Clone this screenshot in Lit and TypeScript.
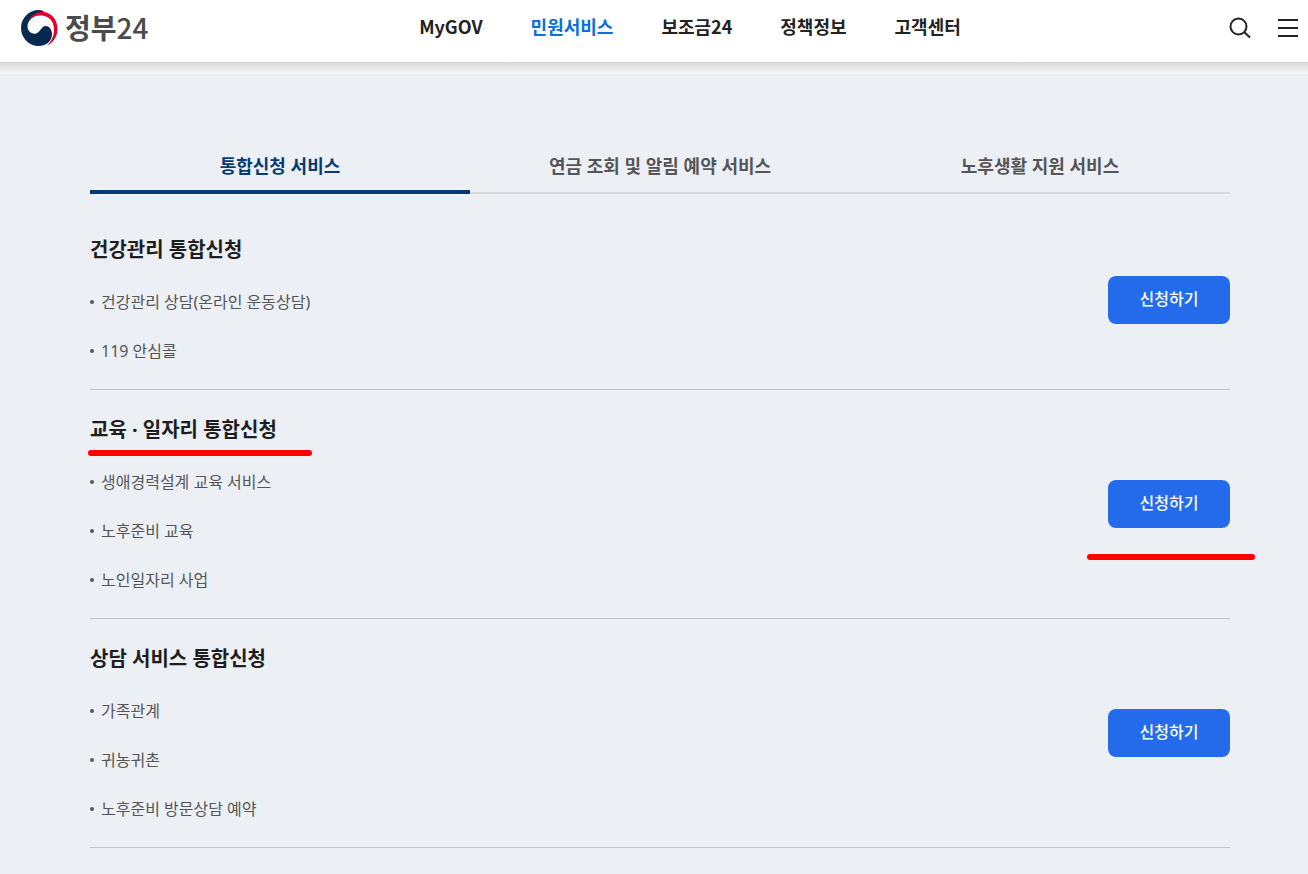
import { LitElement, html, css, nothing } from "lit";
import { customElement, state } from "lit/decorators.js";
import { classMap } from "lit/directives/class-map.js";

interface Section {
  title: string;
  items: string[];
  marked?: boolean;
}

const NAV = ["MyGOV", "민원서비스", "보조금24", "정책정보", "고객센터"];
const TABS = ["통합신청 서비스", "연금 조회 및 알림 예약 서비스", "노후생활 지원 서비스"];
const SECTIONS: Section[] = [
  { title: "건강관리 통합신청", items: ["건강관리 상담(온라인 운동상담)", "119 안심콜"] },
  {
    title: "교육 · 일자리 통합신청",
    items: ["생애경력설계 교육 서비스", "노후준비 교육", "노인일자리 사업"],
    marked: true,
  },
  { title: "상담 서비스 통합신청", items: ["가족관계", "귀농귀촌", "노후준비 방문상담 예약"] },
];

@customElement("gov-header")
class GovHeader extends LitElement {
  static styles = css`
    :host {
      display: block;
      font-family: "Noto Sans CJK KR", sans-serif;
    }
    .bar {
      display: grid;
      grid-template-columns: 1fr auto 1fr;
      align-items: center;
      height: 56px;
      padding: 0 10px 6px 20px;
      background: #fff;
      color: #222;
    }
    .shade {
      height: 12px;
      background: linear-gradient(#d6d6d6, #f9f9f9);
    }
    .logo {
      display: flex;
      align-items: center;
      gap: 7px;
      color: #4a4b4d;
      font-size: 28px;
      line-height: 38px;
      font-weight: 700;
      text-decoration: none;
    }
    .name {
      padding-bottom: 2px;
    }
    .digits {
      font-weight: 500;
    }
    .nav {
      display: flex;
      gap: 48px;
      padding: 0 0 4px 62px;
    }
    .link {
      color: #222;
      font-size: 18px;
      line-height: 26px;
      font-weight: 700;
      text-decoration: none;
      white-space: nowrap;
    }
    .link.current {
      color: #0b6fdc;
    }
    .tools {
      display: flex;
      justify-content: flex-end;
      gap: 26px;
    }
    .tool {
      display: flex;
      padding: 0;
      border: 0;
      background: none;
      color: #222;
      cursor: pointer;
    }
  `;

  render() {
    return html`
      <header>
        <div class="bar">
          <a class="logo" href="#">
            <svg width="38" height="38" viewBox="0 0 38 38" aria-hidden="true">
              <path
                fill="#06294f"
                d="M19 1C9 1 1 9 1 19s8 18 17.500 18C25.500 37 32 33 32 25C32 20.500 29 17 25.500 17C21.500 17 20.500 23 16 24.500C11.500 25.500 7.500 22 7.500 17.500C7.500 11 14 6 22 5C24 4.700 25 4.700 26 5C24.500 2.500 22 1 19 1Z"
              />
              <path
                fill="#e4002b"
                d="M10 8.500C13.500 4.500 18.500 2.500 23.500 3C31.500 3.800 37.500 11 37.500 19.500C37.500 27.500 33.500 33.500 26.500 37C31.500 32.500 34 27 34 20.500C34 12.500 29.500 7.300 22 6.500C17.500 6 13 7 10 9.500Z"
              />
            </svg>
            <span class="name">정부<span class="digits">24</span></span>
          </a>
          <nav class="nav">
            ${NAV.map(
              (n, i) => html`<a class=${classMap({ link: true, current: i === 1 })} href="#">${n}</a>`
            )}
          </nav>
          <div class="tools">
            <button class="tool" aria-label="검색">
              <svg width="24" height="24" viewBox="0 0 24 24" fill="none" stroke="currentColor" stroke-width="2">
                <circle cx="10.500" cy="10.500" r="8" />
                <path d="M16 16L22 21.500" />
              </svg>
            </button>
            <button class="tool" aria-label="전체 메뉴">
              <svg width="20" height="24" viewBox="0 0 20 24" fill="none" stroke="currentColor" stroke-width="2">
                <path d="M0 4H20M0 12H20M0 20H20" />
              </svg>
            </button>
          </div>
        </div>
        <div class="shade"></div>
      </header>
    `;
  }
}

@customElement("app-root")
class AppRoot extends LitElement {
  @state() private active = 0;

  static styles = css`
    :host {
      display: block;
      min-height: 100vh;
      background: #ecf0f5;
      font-family: "Noto Sans", "Noto Sans CJK KR", sans-serif;
      color: #1e1e1e;
    }
    .main {
      padding: 66px 78px 26px 90px;
    }
    .tabs {
      display: grid;
      grid-template-columns: repeat(3, 1fr);
      box-shadow: inset 0 -2px #d6d8da;
    }
    .tab {
      padding: 11px 0 9px;
      border: 0;
      border-bottom: 4px solid transparent;
      background: none;
      color: #555;
      font-family: inherit;
      font-size: 18px;
      line-height: 30px;
      font-weight: 700;
      cursor: pointer;
    }
    .tab.active {
      border-bottom-color: #063a74;
      color: #063a74;
    }
    .panel {
      padding-top: 16px;
    }
    .section {
      display: flex;
      align-items: center;
      justify-content: space-between;
      border-bottom: 1px solid #c2c4c8;
    }
    .body {
      padding: 25px 0 26px;
    }
    .title {
      position: relative;
      margin: 0 0 25px;
      font-size: 20px;
      line-height: 30px;
      font-weight: 700;
    }
    .list {
      display: grid;
      gap: 25px;
      margin: 0;
      padding: 0;
      list-style: none;
    }
    .item {
      display: flex;
      align-items: center;
      gap: 7px;
      color: #555;
      font-size: 16px;
      line-height: 24px;
    }
    .item::before {
      content: "";
      width: 4px;
      height: 4px;
      border-radius: 50%;
      background: #555;
    }
    .action {
      position: relative;
    }
    .apply {
      display: block;
      width: 122px;
      height: 48px;
      padding: 0 0 2px;
      border: 0;
      border-radius: 8px;
      background: #246beb;
      color: #fff;
      font-family: inherit;
      font-size: 16px;
      line-height: 24px;
      font-weight: 500;
      cursor: pointer;
    }
    .mark {
      position: absolute;
      height: 6px;
      border-radius: 3px;
      background: #f00;
    }
    .mark-title {
      top: 35px;
      left: -2px;
      width: 224px;
    }
    .mark-action {
      top: 74px;
      left: -21px;
      width: 168px;
    }
  `;

  render() {
    return html`
      <gov-header></gov-header>
      <main class="main">
        <div class="tabs" role="tablist">
          ${TABS.map(
            (t, i) => html`<button
              role="tab"
              aria-selected=${i === this.active}
              class=${classMap({ tab: true, active: i === this.active })}
              @click=${() => (this.active = i)}
            >${t}</button>`
          )}
        </div>
        <div class="panel" role="tabpanel">
          ${SECTIONS.map(
            (s) => html`<section class="section">
              <div class="body">
                <h2 class="title">
                  ${s.title}${s.marked ? html`<span class="mark mark-title"></span>` : nothing}
                </h2>
                <ul class="list">
                  ${s.items.map((x) => html`<li class="item">${x}</li>`)}
                </ul>
              </div>
              <div class="action">
                <button class="apply">신청하기</button>
                ${s.marked ? html`<span class="mark mark-action"></span>` : nothing}
              </div>
            </section>`
          )}
        </div>
      </main>
    `;
  }
}
